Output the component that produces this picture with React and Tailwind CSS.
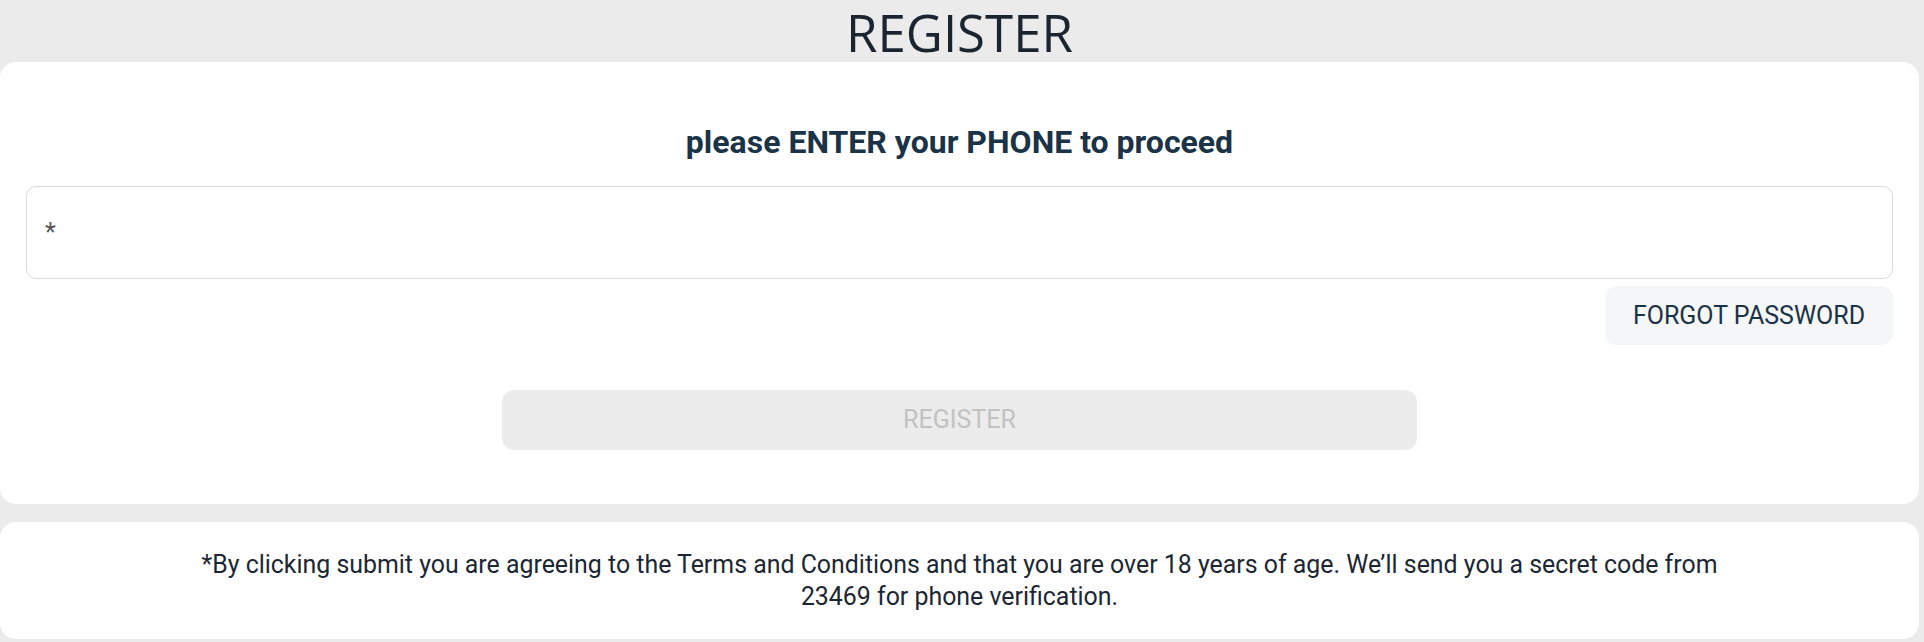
import React from "react";

export default function App() {
  return (
    <div
      className="min-h-[642px] bg-[#ebebeb] pr-[5px] pb-[3px]"
      style={{ fontFamily: "Roboto, 'Liberation Sans', sans-serif" }}
    >
      <div className="flex h-[62px] items-start justify-center pt-[2px]">
        <h1
          className="text-[51px] leading-[60px] text-[#1a2530]"
          style={{ fontFamily: "'Open Sans', 'Noto Sans', sans-serif" }}
        >
          REGISTER
        </h1>
      </div>

      <div className="rounded-2xl bg-white px-[26px] pt-[63px] pb-[54px]">
        <h2 className="text-center text-[32px] font-bold leading-[34px] text-[#1b3347]">
          please ENTER your PHONE to proceed
        </h2>

        <div className="mt-[27px] flex h-[93px] items-center rounded-[10px] border border-[#dadada] px-[18px]">
          <input
            type="tel"
            placeholder="*"
            className="w-full bg-transparent text-[25px] text-[#555] outline-none placeholder:text-[#555]"
          />
        </div>

        <div className="mt-[7px] flex justify-end">
          <button className="h-[59px] w-[288px] rounded-xl bg-[#f4f6f8] text-[25px] text-[#1b3347]">
            FORGOT PASSWORD
          </button>
        </div>

        <div className="mt-[45px] flex justify-center">
          <button
            disabled
            className="h-[60px] w-[915px] rounded-xl bg-[#ececec] text-[25px] text-[#c2c2c2]"
          >
            REGISTER
          </button>
        </div>
      </div>

      <div className="mt-[18px] flex h-[117px] items-center justify-center rounded-2xl bg-white">
        <p className="max-w-[1560px] text-center text-[24.9px] leading-[32px] text-[#1d2733]">
          *By clicking submit you are agreeing to the Terms and Conditions and that you are over 18 years of age. We’ll send you a secret code from 23469 for phone verification.
        </p>
      </div>
    </div>
  );
}
